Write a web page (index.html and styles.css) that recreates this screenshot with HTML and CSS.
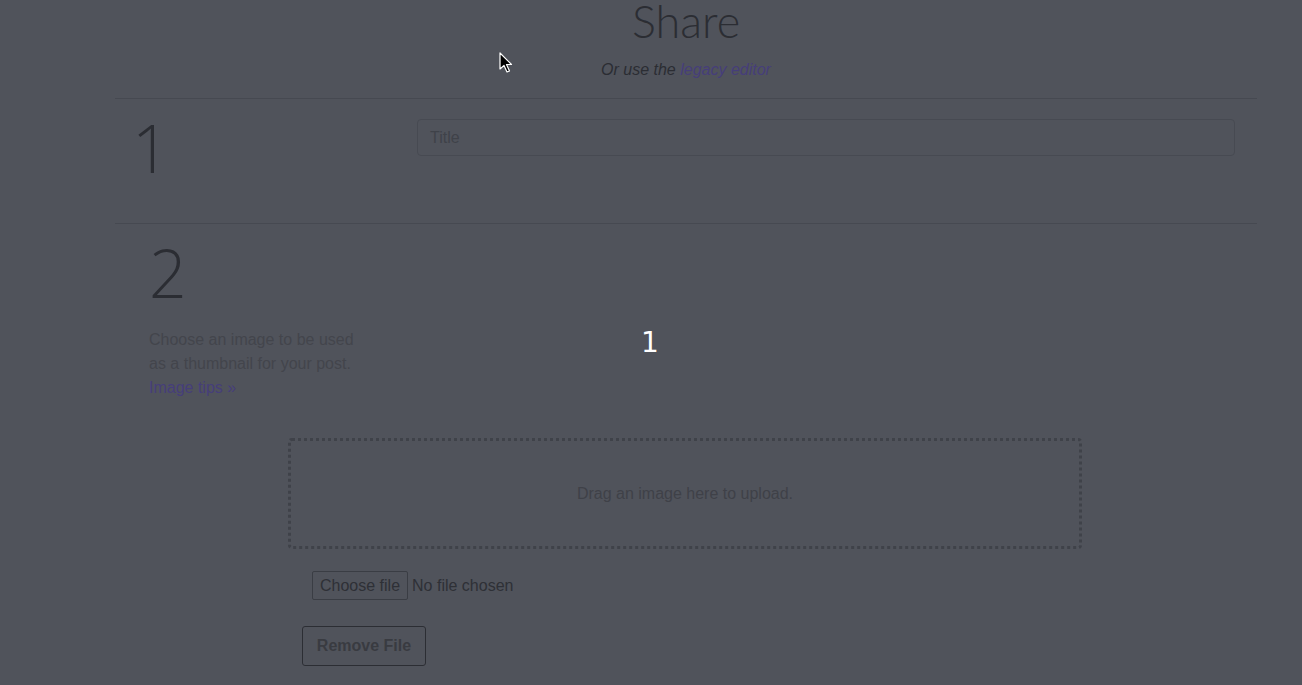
FILE: index.html
```html
<!DOCTYPE html>
<html>
<head>
<meta charset="utf-8">
<title>Share</title>
<link rel="stylesheet" href="styles.css">
</head>
<body>
<div class="page">
  <header class="head">
    <h1 class="title">Share</h1>
    <p class="sub">Or use the <a class="link" href="#">legacy editor</a></p>
  </header>
  <section class="step step-one">
    <div class="num num-one">1</div>
    <div class="field-col">
      <div class="input">Title</div>
    </div>
  </section>
  <section class="step step-two">
    <div class="left-two">
      <div class="num num-two">2</div>
      <p class="desc">Choose an image to be used<br>as a thumbnail for your post.<br><a class="link" href="#">Image tips »</a></p>
    </div>
  </section>
  <div class="upload">
    <div class="drop">Drag an image here to upload.</div>
    <div class="file-row"><span class="choose">Choose file</span><span class="nofile">No file chosen</span></div>
    <div class="remove">Remove File</div>
  </div>
</div>
<div class="counter">1</div>
<svg class="cursor" width="14" height="22" viewBox="0 0 14 22"><path d="M1 1 L1 17 L5 13.5 L8 20 L10.5 19 L7.5 12.5 L12.5 12.5 Z" fill="#000" stroke="#fff" stroke-width="1.2" stroke-linejoin="round"/></svg>
</body>
</html>
```
FILE: styles.css
```css
html, body {
  margin: 0;
  padding: 0;
  background: #50535b;
  font-family: "Liberation Sans", Arial, sans-serif;
  height: 685px;
  overflow: hidden;
}
.page {
  margin-left: 115px;
  width: 1142px;
}
.head {
  text-align: center;
  height: 99px;
  border-bottom: 1px solid #464951;
  box-sizing: border-box;
}
.title {
  margin: 0;
  font-family: "Lato", "Open Sans", sans-serif;
  font-weight: 300;
  font-size: 45px;
  line-height: 42px;
  color: #2b2d33;
}
.sub {
  margin: 18px 0 0;
  font-style: italic;
  font-size: 16px;
  line-height: 20px;
  color: #2b2d33;
}
.link {
  color: #463e7a;
  text-decoration: none;
}
.step-one {
  display: flex;
  height: 125px;
  border-bottom: 1px solid #464951;
  box-sizing: border-box;
}
.num {
  font-family: "Open Sans", sans-serif;
  font-weight: 300;
  font-size: 66px;
  line-height: 72px;
  color: #2b2d33;
}
.num-one {
  width: 302px;
  padding-left: 17px;
  padding-top: 12px;
  box-sizing: border-box;
}
.field-col {
  flex: 1;
  padding-top: 20px;
  padding-right: 22px;
}
.input {
  height: 37px;
  box-sizing: border-box;
  border: 1px solid #474a52;
  border-radius: 4px;
  padding: 0 12px;
  font-size: 16px;
  line-height: 35px;
  color: #3f4249;
}
.step-two {
  height: 214px;
}
.left-two {
  padding-left: 34px;
  padding-top: 12px;
}
.desc {
  margin: 20px 0 0;
  font-size: 16px;
  line-height: 24px;
  color: #43454c;
}
.upload {
  padding-left: 173px;
}
.drop {
  width: 794px;
  height: 111px;
  box-sizing: border-box;
  border: 3px dotted #3f4249;
  border-radius: 4px;
  display: flex;
  align-items: center;
  justify-content: center;
  font-size: 16px;
  color: #3f4148;
}
.file-row {
  margin-top: 22px;
  padding-left: 24px;
  display: flex;
  align-items: center;
  font-size: 16px;
}
.choose {
  border: 1px solid #3a3d44;
  border-radius: 2px;
  height: 29px;
  box-sizing: border-box;
  padding: 0 7px;
  line-height: 27px;
  color: #2e3036;
}
.nofile {
  margin-left: 4px;
  color: #2e3036;
}
.remove {
  margin-top: 26px;
  margin-left: 14px;
  width: 124px;
  height: 40px;
  box-sizing: border-box;
  border: 1px solid #2c2e34;
  border-radius: 3px;
  font-weight: bold;
  font-size: 16px;
  line-height: 38px;
  text-align: center;
  color: #393b41;
}
.counter {
  position: absolute;
  left: 640px;
  top: 326px;
  width: 20px;
  text-align: center;
  font-family: "DejaVu Sans", sans-serif;
  font-size: 28px;
  line-height: 34px;
  color: #ffffff;
}
.cursor {
  position: absolute;
  left: 499px;
  top: 52px;
}
```
